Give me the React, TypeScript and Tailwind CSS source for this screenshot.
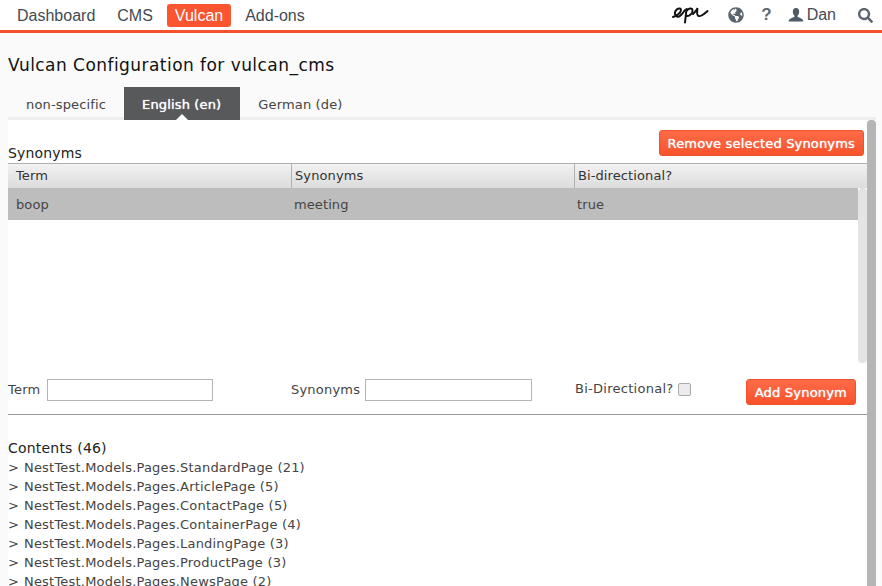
import { FaGlobeAmericas, FaSearch } from "react-icons/fa";

const NAV = [
  { label: "Dashboard", active: false },
  { label: "CMS", active: false },
  { label: "Vulcan", active: true },
  { label: "Add-ons", active: false },
];

const TABS = [
  { label: "non-specific", active: false },
  { label: "English (en)", active: true },
  { label: "German (de)", active: false },
];

const CONTENTS = [
  "NestTest.Models.Pages.StandardPage (21)",
  "NestTest.Models.Pages.ArticlePage (5)",
  "NestTest.Models.Pages.ContactPage (5)",
  "NestTest.Models.Pages.ContainerPage (4)",
  "NestTest.Models.Pages.LandingPage (3)",
  "NestTest.Models.Pages.ProductPage (3)",
  "NestTest.Models.Pages.NewsPage (2)",
];

function EpiLogo() {
  return (
    <svg width="37" height="18" viewBox="0 0 37 18" fill="none" stroke="#111" strokeWidth="2" strokeLinecap="round" aria-hidden>
      <path d="M1 11C4 10 9 7 9 4C9 1.500 5 2 3.500 5C2 8.500 4 11.500 7 10.500C9 9.500 11 7 13 4" />
      <path d="M14.500 3C14 8 13.500 12 13 16.500M14.500 5C16 2 20 1.500 20.500 4C21 7 18 10 15 10" />
      <path d="M21 8C23 6 25 4 25.500 2C25 5 24.500 9 26.500 10C29 11 32 8 35.500 5" />
    </svg>
  );
}

function UserIcon() {
  return (
    <svg width="16" height="16" viewBox="0 0 16 16" fill="currentColor" aria-hidden>
      <path d="M8 1C5.800 1 4.800 2.600 4.800 4.600C4.800 6.600 5.600 8 6.400 8.800V10C4.400 10.800 1 11.400 .6 14.500H15.400C15 11.400 11.600 10.800 9.600 10V8.800C10.400 8 11.200 6.600 11.200 4.600C11.200 2.600 10.200 1 8 1Z" />
    </svg>
  );
}

function TopBar() {
  return (
    <header className="flex h-[33px] items-center justify-between border-b-[3px] border-[#f5512c] bg-white pl-[7px] font-['Liberation_Sans',sans-serif] text-base text-[#444b53]">
      <nav className="flex items-center gap-[2px]">
        {NAV.map((item) => (
          <a
            key={item.label}
            className={`rounded-[3px] leading-[23px] ${item.active ? "mx-[2px] bg-[#fb5430] px-[8px] text-white" : "px-[10px]"}`}
          >
            {item.label}
          </a>
        ))}
      </nav>
      <div className="flex items-center text-[#4f5a66]">
        <EpiLogo />
        <FaGlobeAmericas className="ml-[19px] text-[16px] text-[#5b6570]" />
        <span className="ml-[17px] text-[17px] font-bold text-[#5f6770]">?</span>
        <span className="ml-[16px]">
          <UserIcon />
        </span>
        <span className="ml-[3px] text-[#444b53]">Dan</span>
        <FaSearch className="ml-[22px] mr-[9px] text-[15px] text-[#5b6570]" />
      </div>
    </header>
  );
}

function Tabs() {
  return (
    <div className="relative z-10 flex pl-[8px] text-[13px] leading-[35px] tracking-[0.15px] text-[#444]">
      {TABS.map((tab) => (
        <div
          key={tab.label}
          className={`relative h-[33px] pl-[18px] ${tab.active ? "bg-[#58595b] pr-[19px] text-white [text-shadow:0_0_1px_#fff]" : "pr-[18px]"}`}
        >
          {tab.label}
          {tab.active && (
            <span className="absolute bottom-0 left-1/2 -ml-[6px] border-x-[6px] border-b-[6px] border-x-transparent border-b-white" />
          )}
        </div>
      ))}
    </div>
  );
}

function SynonymTable() {
  return (
    <>
      <div className="flex h-[43px] items-end justify-between pr-[3px]">
        <span className="mb-[1px] text-sm leading-[17px] tracking-[0.15px] text-[#222]">Synonyms</span>
        <button className="mb-[7px] h-[26px] rounded-[3px] border border-[#ee5330] bg-gradient-to-b from-[#fd6b47] to-[#f8522a] px-[8px] pt-[1px] text-[13px] tracking-[0.17px] text-white [text-shadow:0_0_1px_#fff]">
          Remove selected Synonyms
        </button>
      </div>
      <div className="grid h-[25px] grid-cols-[283px_283px_1fr] border-t border-[#b0b0b0] bg-gradient-to-b from-[#f2f2f2] to-[#dcdcdc] text-[13px] leading-[24px] tracking-[0.1px] text-[#333]">
        <div className="pl-[8px]">Term</div>
        <div className="border-l border-[#b0b0b0] pl-[3px]">Synonyms</div>
        <div className="border-l border-[#b0b0b0] pl-[3px]">Bi-directional?</div>
      </div>
      <div className="flex h-[175px]">
        <div className="flex-1">
          <div className="grid h-[32px] grid-cols-[283px_283px_1fr] bg-[#bdbdbd] text-[13px] leading-[34px] tracking-[0.1px] text-[#444]">
            <div className="pl-[8px]">boop</div>
            <div className="pl-[3px]">meeting</div>
            <div className="pl-[3px]">true</div>
          </div>
        </div>
        <div className="w-[9px] rounded-[4px] bg-[#e4e4e4]" />
      </div>
    </>
  );
}

function AddForm() {
  const field = "h-[22px] border border-[#b4b4b4] bg-white";
  return (
    <div className="flex h-[52px] border-b border-[#999] text-[13px] tracking-[0.2px] text-[#444]">
      <div className="flex w-[283px] items-start pt-[16px]">
        <span className="leading-[22px]">Term</span>
        <input className={`ml-[7px] w-[166px] ${field}`} />
      </div>
      <div className="flex w-[284px] items-start pt-[16px]">
        <span className="leading-[22px]">Synonyms</span>
        <input className={`ml-[5px] w-[167px] ${field}`} />
      </div>
      <div className="flex flex-1 items-start justify-between pr-[11px] pt-[16px]">
        <label className="mt-[1px] flex items-center leading-[18px] tracking-[0.27px]">
          Bi-Directional?
          <input type="checkbox" className="ml-[5px] h-[13px] w-[13px] appearance-none rounded-[2px] border border-[#aaa] bg-[#ececec]" />
        </label>
        <button className="h-[26px] rounded-[3px] border border-[#ee5330] bg-gradient-to-b from-[#fd6b47] to-[#f8522a] px-[8px] pt-[1px] text-[13px] tracking-[0.2px] text-white [text-shadow:0_0_1px_#fff]">
          Add Synonym
        </button>
      </div>
    </div>
  );
}

export default function App() {
  return (
    <div className="h-[586px] w-[882px] overflow-hidden bg-[#fafafa] font-['DejaVu_Sans',sans-serif]">
      <TopBar />
      <h1 className="pl-[8px] pt-[22px] text-[17px] leading-[20px] tracking-[0.45px] text-[#111]">Vulcan Configuration for vulcan_cms</h1>
      <div className="mt-[12px]">
        <Tabs />
      </div>
      <div className="ml-[8px] mr-[6px] -mt-[3px] flex h-[469px] border-t-[3px] border-[#eeeeee] bg-white">
        <div className="flex-1">
          <SynonymTable />
          <AddForm />
          <div className="mt-[24px] text-sm leading-[19px] tracking-[0.2px] text-[#222]">Contents (46)</div>
          <ul className="text-[13px] leading-[19px] tracking-[0.2px] text-[#444]">
            {CONTENTS.map((item) => (
              <li key={item}>
                <span className="inline-block w-[16px]">&gt;</span>
                {item}
              </li>
            ))}
          </ul>
        </div>
        <div className="w-[9px] rounded-t-[4px] bg-[#b5b5b5]" />
      </div>
    </div>
  );
}
